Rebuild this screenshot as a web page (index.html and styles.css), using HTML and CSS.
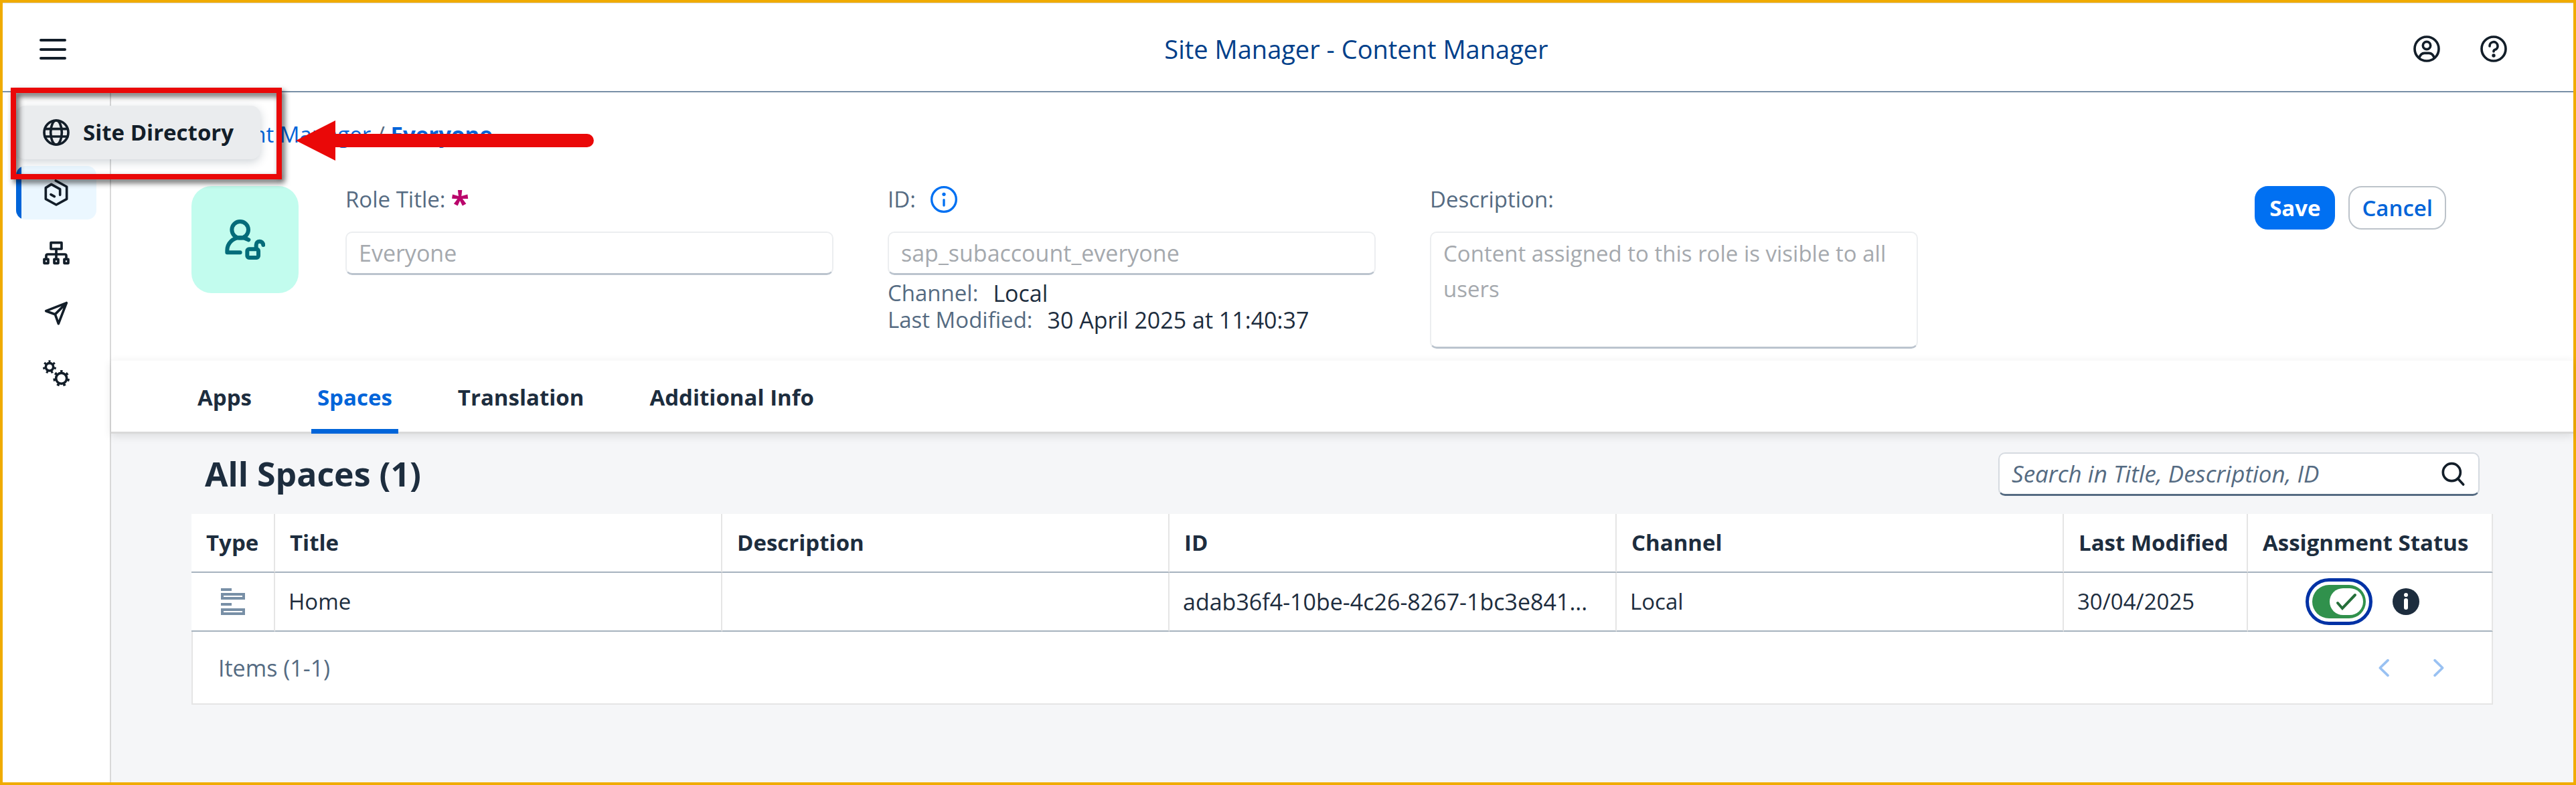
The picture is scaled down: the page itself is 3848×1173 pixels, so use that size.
FILE: index.html
```html
<!DOCTYPE html>
<html lang="en">
<head>
<meta charset="utf-8">
<title>Site Manager - Content Manager</title>
<link rel="stylesheet" href="styles.css">
</head>
<body>
<div class="app">
  <header class="shell">
    <button class="icon-button shell-menu" aria-label="Menu">
      <svg class="icon" viewBox="0 0 40 40"><path class="bars" d="M2 7H38M2 21H38M2 34H38"/></svg>
    </button>
    <h1 class="shell-title">Site Manager - Content Manager</h1>
    <div class="shell-actions">
      <button class="icon-button" aria-label="Account">
        <svg class="icon line" viewBox="0 0 120 120"><circle cx="60" cy="60" r="54"/><circle cx="60" cy="45" r="17"/><path d="M26 101Q33 79 50 79H70Q87 79 94 101"/></svg>
      </button>
      <button class="icon-button" aria-label="Help">
        <svg class="icon line" viewBox="0 0 120 120"><circle cx="60" cy="60" r="54"/><path d="M42 48A18 18 0 1 1 66 64Q60 66 60 72"/><circle class="dot" cx="60" cy="90" r="8"/></svg>
      </button>
    </div>
  </header>

  <div class="body">
    <nav class="side" aria-label="Site Manager">
      <a class="side-item side-open" href="#sites">
        <svg class="icon line" viewBox="0 0 120 120"><circle cx="60" cy="60" r="54"/><ellipse cx="60" cy="60" rx="25" ry="54"/><path d="M9 44H111M9 78H111"/></svg>
        <span>Site Directory</span>
      </a>
      <a class="side-item side-selected" href="#content" aria-label="Content Manager" aria-current="page">
        <svg class="icon line" viewBox="0 0 120 120"><path d="M58 6L107 33V88L60 114L13 88V38L38 22L77 44V70M36 68L52 77"/></svg>
      </a>
      <a class="side-item" href="#channels" aria-label="Channel Manager">
        <svg class="icon line" viewBox="0 0 120 120"><rect x="36" y="14" width="48" height="28"/><path d="M60 42V86M15 86V72Q15 66 22 66H98Q105 66 105 72V86"/><rect x="6" y="88" width="18" height="18"/><rect x="51" y="88" width="18" height="18"/><rect x="96" y="88" width="18" height="18"/></svg>
      </a>
      <a class="side-item" href="#transport" aria-label="Transport">
        <svg class="icon line" viewBox="0 0 120 120"><path d="M106 14L14 50L55 65L70 107L106 14L55 65"/></svg>
      </a>
      <a class="side-item" href="#settings" aria-label="Settings">
        <svg class="icon line" viewBox="0 0 120 120"><circle cx="30" cy="31" r="17"/><circle class="teeth" cx="30" cy="31" r="25" pathLength="70" transform="rotate(-90 30 31)"/><circle cx="83" cy="82" r="24"/><circle class="teeth" cx="83" cy="82" r="32" pathLength="70" transform="rotate(-90 83 82)"/></svg>
      </a>
    </nav>

    <main class="main">
      <section class="role">
        <div class="crumbs"><a href="#content">Content Manager</a> / <a class="crumb-current" href="#everyone">Everyone</a></div>
        <div class="role-row">
          <div class="avatar">
            <svg viewBox="0 0 180 180"><circle cx="68" cy="46" r="37"/><path d="M106 91Q88 81 68 81A58 58 0 0 0 10 139V148H68"/><rect x="100" y="133" width="50" height="38" rx="8"/><path d="M140 130V114C140 93 170 93 172 114"/></svg>
          </div>
          <div class="fields">
            <div class="field">
              <div class="label-row"><label for="title">Role Title:</label><span class="required">*</span></div>
              <input class="control" id="title" value="Everyone" disabled>
            </div>
            <div class="field">
              <div class="label-row"><label for="rid">ID:</label>
                <svg class="icon info" viewBox="0 0 120 120"><circle cx="60" cy="60" r="55"/><path d="M60 62V87"/><circle class="dot" cx="60" cy="37" r="8"/></svg>
              </div>
              <input class="control" id="rid" value="sap_subaccount_everyone" disabled>
              <dl class="facts">
                <div class="fact"><dt>Channel:</dt><dd>Local</dd></div>
                <div class="fact"><dt>Last Modified:</dt><dd>30 April 2025 at 11:40:37</dd></div>
              </dl>
            </div>
            <div class="field">
              <div class="label-row"><label for="desc">Description:</label></div>
              <textarea class="control area" id="desc" disabled>Content assigned to this role is visible to all users</textarea>
            </div>
          </div>
          <div class="actions">
            <button class="button primary">Save</button>
            <button class="button">Cancel</button>
          </div>
        </div>
      </section>

      <nav class="tabs" aria-label="Sections">
        <a class="tab" href="#apps">Apps</a>
        <a class="tab tab-active" href="#spaces">Spaces</a>
        <a class="tab" href="#translation">Translation</a>
        <a class="tab" href="#info">Additional Info</a>
      </nav>

      <section class="spaces">
        <div class="toolbar">
          <h2 class="heading">All Spaces (1)</h2>
          <div class="search">
            <input class="search-input" type="text" aria-label="Search spaces" placeholder="Search in Title, Description, ID">
            <button class="icon-button" aria-label="Search"><svg class="icon line" viewBox="0 0 120 120"><circle cx="55" cy="53" r="39"/><path d="M83 82L107 108"/></svg></button>
          </div>
        </div>
        <table class="table">
          <colgroup><col class="col-type"><col><col><col><col><col class="col-date"><col class="col-status"></colgroup>
          <thead>
            <tr><th>Type</th><th>Title</th><th>Description</th><th>ID</th><th>Channel</th><th>Last Modified</th><th>Assignment Status</th></tr>
          </thead>
          <tbody>
            <tr>
              <td><svg class="icon page" viewBox="0 0 40 40"><path d="M2 2H18M2 24H18"/><rect x="4" y="9" width="32" height="6"/><rect x="4" y="32" width="32" height="6"/></svg></td>
              <td>Home</td><td></td><td class="guid">adab36f4-10be-4c26-8267-1bc3e841...</td><td>Local</td><td>30/04/2025</td>
              <td>
                <div class="status">
                  <span class="switch"><input class="switch-input" type="checkbox" aria-label="Assigned" checked><svg class="tick" viewBox="0 0 50 40"><path d="M12 22L19 30L38 10"/></svg></span>
                  <svg class="icon" viewBox="0 0 40 40"><circle class="info-disc" cx="20" cy="20" r="20"/><circle class="info-mark" cx="20" cy="10" r="3"/><rect class="info-mark" x="17" y="15" width="6" height="17" rx="3"/></svg>
                </div>
              </td>
            </tr>
          </tbody>
        </table>
        <footer class="pager">
          <span>Items (1-1)</span>
          <div class="pager-buttons">
            <button class="icon-button" aria-label="Previous page" disabled><svg class="icon line" viewBox="0 0 120 120"><path d="M75 26L40 60L75 94"/></svg></button>
            <button class="icon-button" aria-label="Next page" disabled><svg class="icon line" viewBox="0 0 120 120"><path d="M45 26L80 60L45 94"/></svg></button>
          </div>
        </footer>
      </section>
    </main>
  </div>

  <div class="mark-frame"></div>
  <svg class="mark-arrow" viewBox="0 0 445 60"><path d="M0 30L59 0V20H435A10 10 0 0 1 435 40H59V60Z"/></svg>
</div>
</body>
</html>
```
FILE: styles.css
```css
:root {
  --ink: #1d2d3e;
  --icon: #131e29;
  --label: #556b82;
  --link: #0064d9;
  --line: #e5e5e5;
  --rule: #a6b2be;
  --text: 33px;
  --value: 34px;
}

* { box-sizing: border-box; }

body {
  margin: 0;
  background: #f5f6f8;
  color: var(--ink);
  font: var(--text)/40px "Open Sans", "Noto Sans", sans-serif;
}

a { color: inherit; text-decoration: none; }

button, input, textarea { font: inherit; }

.app {
  position: relative;
  display: flex;
  flex-direction: column;
  min-height: 100vh;
  border: 4px solid #f0ab00;
}

.icon { display: block; flex: none; width: 40px; height: 40px; }

.line {
  fill: none;
  stroke: currentColor;
  stroke-width: 11;
  stroke-linecap: round;
  stroke-linejoin: round;
}

.dot { fill: currentColor; stroke: none; }

.bars { stroke: currentColor; stroke-width: 4; stroke-linecap: round; }

.teeth { stroke-dasharray: 4 6; stroke-dashoffset: 2; stroke-linecap: butt; stroke-width: 10; }

.icon-button {
  padding: 0;
  border: 0;
  background: none;
  color: var(--icon);
}

/* Shell bar */
.shell {
  display: grid;
  grid-template-columns: 479px 1fr 275px;
  align-items: center;
  height: 134px;
  padding-top: 4px;
  background: #fff;
  border-top: 1px solid #d9d9d9;
  border-bottom: 2px solid #788fa6;
}

.shell-menu { justify-self: start; margin-left: 55px; }

.shell-title {
  margin: 0;
  color: #00408a;
  font-size: 38px;
  font-weight: 400;
  text-align: center;
}

.shell-actions { display: flex; gap: 60px; padding-left: 36px; }

/* Side navigation */
.body { display: flex; flex: 1; }

.side {
  display: flex;
  flex-direction: column;
  gap: 10px;
  flex: none;
  width: 162px;
  padding: 20px;
  background: #fff;
  border-right: 2px solid #d9d9d9;
}

.side-item {
  display: flex;
  align-items: center;
  width: 120px;
  height: 80px;
  padding-left: 40px;
  border-radius: 14px;
  color: var(--icon);
}

.side-open {
  position: relative;
  z-index: 1;
  gap: 20px;
  width: 365px;
  background: #eaecee;
  box-shadow: 0 4px 14px rgba(34, 53, 72, .22);
  font-weight: 700;
  white-space: nowrap;
}

.side-selected {
  background: linear-gradient(90deg, var(--link) 8px, #ebf7ff 8px);
}

/* Role header */
.main { flex: 1; min-width: 0; }

.role {
  padding: 43px 190px 16px 120px;
  background: #fff;
}

.crumbs { color: var(--label); }
.crumbs a { color: var(--link); }
.crumbs .crumb-current { font-weight: 700; }

.role-row {
  display: flex;
  align-items: flex-start;
  margin-top: 57px;
}

.avatar {
  display: grid;
  place-items: center;
  flex: none;
  width: 160px;
  height: 160px;
  margin-right: 70px;
  border-radius: 30px;
  background: #c2fcee;
}

.avatar svg {
  width: 60px;
  height: 60px;
  fill: none;
  stroke: #046c7a;
  stroke-width: 18;
  stroke-linecap: round;
  stroke-linejoin: round;
}

.fields {
  display: grid;
  grid-template-columns: repeat(3, 1fr);
  gap: 81px;
  flex: 0 1 2349px;
}

.label-row {
  display: flex;
  height: 40px;
  margin-bottom: 28px;
  color: var(--label);
}

.required {
  margin-left: 8px;
  color: #ba066c;
  font-size: 50px;
  font-weight: 700;
  line-height: 50px;
}

.info {
  margin-left: 22px;
  fill: none;
  stroke: #0070f2;
  stroke-width: 10;
  stroke-linecap: round;
}

.info .dot { fill: #0070f2; }

.control {
  display: block;
  width: 100%;
  height: 65px;
  padding: 0 18px;
  border: 2px solid #eceef0;
  border-bottom: 3px solid #bbc4ce;
  border-radius: 10px;
  background: #fff;
  color: #a5a9ae;
  font-size: var(--value);
}

.area {
  height: 175px;
  padding-top: 4px;
  font-size: var(--text);
  line-height: 53px;
  resize: none;
}

.facts { margin: 7px 0 0; }
.fact { display: flex; gap: 22px; }
.fact dt { color: var(--label); }
.fact dd { margin: 0; font-size: var(--value); }

.actions { display: flex; gap: 20px; margin-left: auto; }

.button {
  min-width: 120px;
  height: 65px;
  padding: 0 18px;
  border: 2px solid #bcc3ca;
  border-radius: 20px;
  background: #fff;
  color: var(--link);
  font-weight: 600;
}

.primary {
  border-color: #0070f2;
  background: #0070f2;
  color: #fff;
  font-weight: 700;
}

/* Tabs */
.tabs {
  position: relative;
  display: flex;
  gap: 80px;
  height: 111px;
  padding: 0 120px;
  background: #fff;
  border-top: 2px solid #fafafa;
  border-bottom: 3px solid #d9d9d9;
  box-shadow: 0 4px 12px rgba(0, 0, 0, .1);
}

.tab {
  height: 109px;
  padding: 0 9px;
  font-weight: 700;
  line-height: 110px;
}

.tab-active {
  color: var(--link);
  background: linear-gradient(var(--link), var(--link)) bottom / 100% 7px no-repeat;
}

/* Spaces list */
.spaces { padding: 0 120px 40px; }

.toolbar {
  display: flex;
  justify-content: space-between;
  align-items: center;
  height: 120px;
  padding: 0 20px;
}

.heading { margin: 0; font-size: 50px; font-weight: 700; }

.search {
  display: flex;
  align-items: center;
  width: 719px;
  height: 65px;
  padding: 0 18px;
  border: 2px solid #d5dae0;
  border-bottom: 3px solid var(--label);
  border-radius: 10px;
  background: #fff;
}

.search-input {
  flex: 1;
  min-width: 0;
  padding: 0;
  border: 0;
  outline: 0;
  background: none;
  font-size: 35px;
}

.search-input::placeholder { color: var(--label); font-style: italic; opacity: 1; }

.table {
  width: 100%;
  table-layout: fixed;
  border-spacing: 0;
  background: #fff;
}

.col-type { width: 125px; }
.col-date { width: 275px; }
.col-status { width: 366px; }

.table th, .table td {
  height: 88px;
  padding: 0 20px;
  border-right: 2px solid var(--line);
  border-bottom: 2px solid var(--rule);
  text-align: left;
  white-space: nowrap;
}

.table th { padding-left: 22px; }

.table .guid { font-size: var(--value); }

.page { margin: 0 auto; fill: none; stroke: #788fa6; stroke-width: 4; }

.status {
  display: flex;
  justify-content: center;
  align-items: center;
  gap: 40px;
  padding-right: 12px;
}

.switch { position: relative; display: block; width: 80px; height: 50px; }

.switch-input {
  display: block;
  width: 80px;
  height: 50px;
  margin: 0;
  appearance: none;
  border-radius: 25px;
  background: #30914c;
  outline: 5px solid #0032a5;
  outline-offset: 5px;
}

.tick {
  position: absolute;
  top: 5px;
  right: 4px;
  width: 50px;
  height: 40px;
  border-radius: 20px;
  background: #fff;
  fill: none;
  stroke: #256f3a;
  stroke-width: 4;
  stroke-linecap: round;
  pointer-events: none;
}

.info-disc { fill: var(--ink); }
.info-mark { fill: #fff; }

.pager {
  display: flex;
  justify-content: space-between;
  align-items: center;
  height: 109px;
  padding: 0 60px 0 38px;
  background: #fff;
  border: 2px solid var(--line);
  border-top: 0;
  color: var(--label);
  font-size: var(--value);
}

.pager-buttons { display: flex; gap: 40px; }
.pager-buttons .icon-button { color: #99c1f2; }

/* Callout marks over the page */
.mark-frame {
  position: absolute;
  z-index: 2;
  top: 127px;
  left: 12px;
  width: 405px;
  height: 137px;
  border: 8px solid #ea0808;
  filter: drop-shadow(4px 5px 4px rgba(0, 0, 0, .65));
  pointer-events: none;
}

.mark-arrow {
  position: absolute;
  z-index: 2;
  top: 176px;
  left: 438px;
  width: 445px;
  height: 60px;
  fill: #ea0808;
  pointer-events: none;
}
```
